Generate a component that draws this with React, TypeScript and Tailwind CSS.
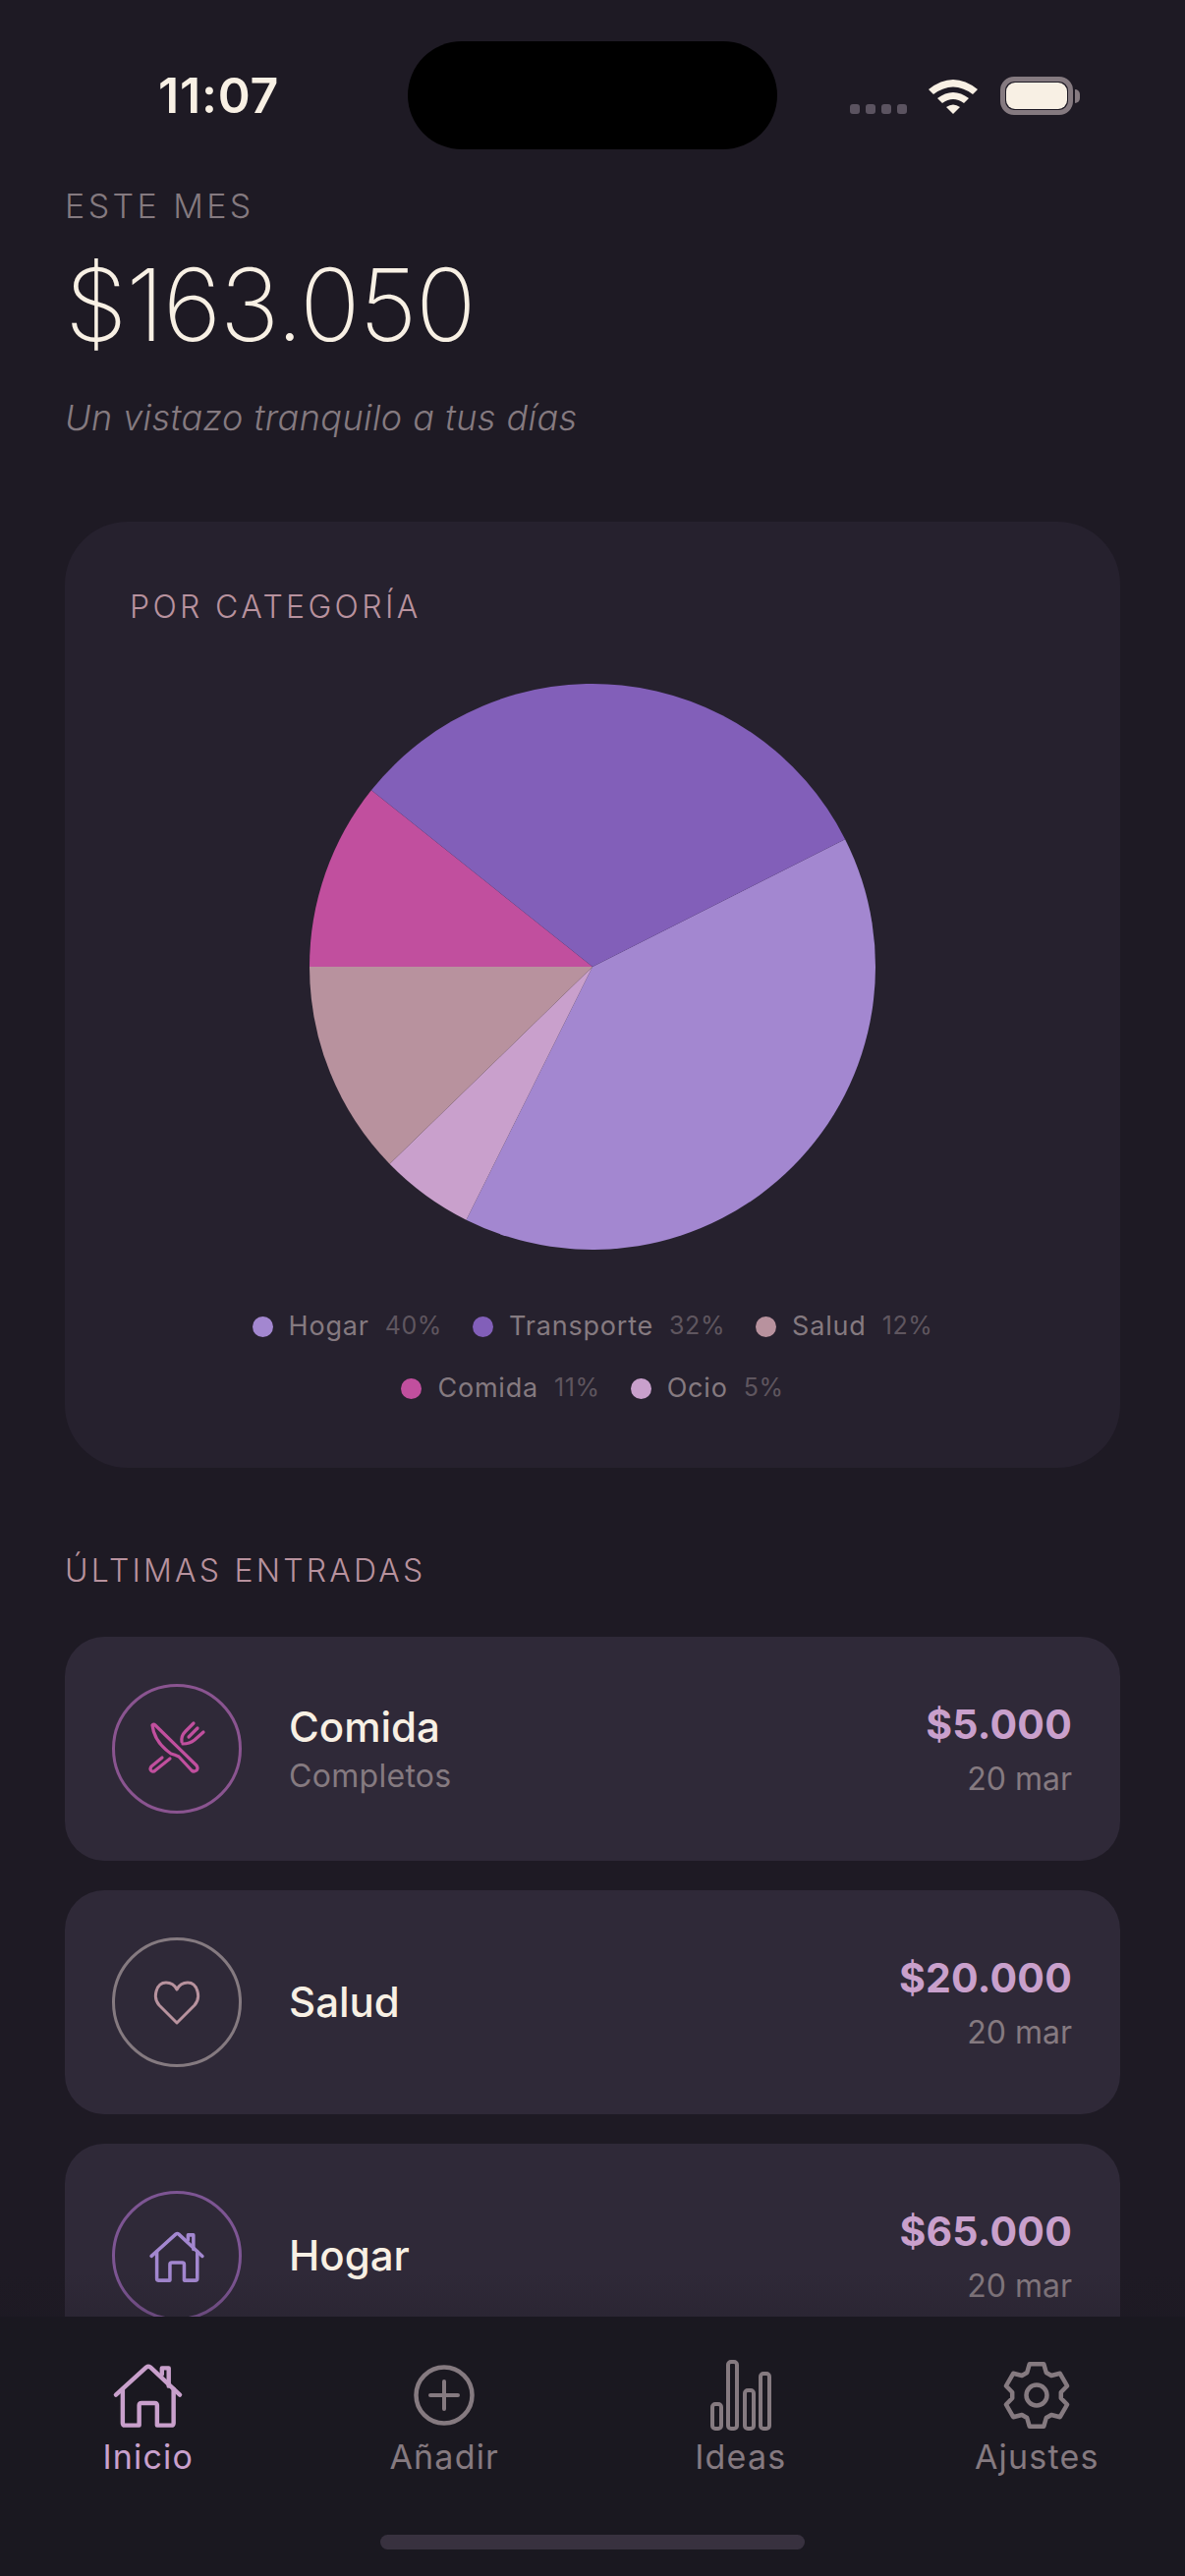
const font = { fontFamily: 'Inter, "Noto Sans", sans-serif' };

const slices = [
  { color: '#a387d0', from: -26.8, to: 116.5 },
  { color: '#c9a0cc', from: 116.5, to: 135.8 },
  { color: '#b8929e', from: 135.8, to: 180 },
  { color: '#c14f9e', from: 180, to: 218.6 },
  { color: '#825fb9', from: 218.6, to: 333.2 },
];

const legend = [
  { name: 'Hogar', pct: '40%', color: '#a387d0' },
  { name: 'Transporte', pct: '32%', color: '#825fb9' },
  { name: 'Salud', pct: '12%', color: '#b8929e' },
  { name: 'Comida', pct: '11%', color: '#c14f9e' },
  { name: 'Ocio', pct: '5%', color: '#c9a0cc' },
];

function slicePath(from: number, to: number) {
  const r = 288;
  const a = (from * Math.PI) / 180;
  const b = (to * Math.PI) / 180;
  const large = to - from > 180 ? 1 : 0;
  return `M288 288 L${288 + r * Math.cos(a)} ${288 + r * Math.sin(a)} A${r} ${r} 0 ${large} 1 ${288 + r * Math.cos(b)} ${288 + r * Math.sin(b)} Z`;
}

function gearPath() {
  const pts: string[] = [];
  for (let k = 0; k < 6; k++) {
    const c = -90 + k * 60;
    const at = (r: number, d: number) => {
      const t = ((c + d) * Math.PI) / 180;
      return `${(45 + r * Math.cos(t)).toFixed(1)} ${(45 + r * Math.sin(t)).toFixed(1)}`;
    };
    pts.push(at(25, -23), at(32.5, -13), at(32.5, 13), at(25, 23));
  }
  return 'M' + pts.join(' L') + ' Z';
}

function HouseIcon({ className, color, width }: { className?: string; color: string; width: number }) {
  return (
    <svg viewBox="8 8 74 70" width={width} className={className} fill="none" stroke={color} strokeWidth="4.5" strokeLinecap="round" strokeLinejoin="round">
      <path d="M12 43 L43.5 14.5 Q45.5 13 47.5 14.5 L78 43" />
      <path d="M19 37 V72 Q19 74.5 21.5 74.5 H36 V54 Q36 51.5 38.5 51.5 H52 Q54.5 51.5 54.5 54 V74.5 H69 Q71.5 74.5 71.5 72 V37" />
      <path d="M59.5 22 V15.5 H66.5 V34" />
    </svg>
  );
}

function CutleryIcon() {
  return (
    <svg viewBox="0 0 80 80" width="80" height="80" fill="none" stroke="#c14f9e" strokeWidth="3.2" strokeLinecap="round" strokeLinejoin="round">
      <path d="M15 16 Q16 14 18 16 L60 57 Q62 60 60 62 Q57 64 55 62 L42 48 Q38 46 34 45 Q17 33 15 16 Z" />
      <path d="M25 49 L14 58 Q12 61 14 62.5 Q16 64 18 62 L33 50" />
      <path d="M57 14 L49 22 Q44 27 45 33" />
      <path d="M61 19 L52 28" />
      <path d="M67 23 L58 31 Q53 35 46 35" />
    </svg>
  );
}

function HeartIcon() {
  return (
    <svg viewBox="0 0 48 45" width="48" height="45" fill="none" stroke="#b8929e" strokeWidth="3" strokeLinejoin="round">
      <path d="M24 43 L6 25 C-1 17 3 2 13 2 C18 2 22 5 24 9 C26 5 30 2 35 2 C45 2 49 17 42 25 Z" />
    </svg>
  );
}

function PlusIcon() {
  return (
    <svg viewBox="0 0 62 62" width="62" height="62" fill="none" stroke="#857a80" strokeLinecap="round">
      <circle cx="31" cy="31" r="28.5" strokeWidth="4.5" />
      <path d="M31 17 V45 M17 31 H45" strokeWidth="4" />
    </svg>
  );
}

function BarsIcon() {
  return (
    <svg viewBox="0 0 62 72" width="62" height="72" fill="none" stroke="#857a80" strokeWidth="4">
      <rect x="2" y="45" width="9" height="25" rx="3" />
      <rect x="18" y="2" width="9" height="68" rx="3" />
      <rect x="35" y="31" width="9" height="39" rx="3" />
      <rect x="51" y="14" width="9" height="56" rx="3" />
    </svg>
  );
}

function GearIcon() {
  return (
    <svg viewBox="10 10 70 70" width="70" height="70" fill="none" stroke="#857a80" strokeWidth="4.5" strokeLinejoin="round">
      <path d={gearPath()} />
      <circle cx="45" cy="45" r="10.5" />
    </svg>
  );
}

function WifiIcon() {
  return (
    <svg viewBox="0 0 50 37" width="50" height="37" fill="#f8f0e4">
      <path d="M0 12 Q25 -8 50 12 L45 17 Q25 2 5 17 Z" />
      <path d="M9 21 Q25 9 41 21 L36 26 Q25 18 14 26 Z" />
      <path d="M18 30 Q25 25 32 30 L25 37 Z" />
    </svg>
  );
}

function EntryCard({ icon, border, title, sub, amount }: { icon: React.ReactNode; border: string; title: string; sub?: string; amount: string }) {
  return (
    <div className="flex h-[228px] shrink-0 items-center rounded-[40px] bg-[#2f2938] pl-[48px] pr-[49px]">
      <div className={`flex h-[132px] w-[132px] shrink-0 items-center justify-center rounded-full border-[3px] ${border}`}>{icon}</div>
      <div className="ml-[48px] flex-1">
        <div className="text-[42px] leading-[50px] font-medium text-[#f8f0e4]">{title}</div>
        {sub && <div className="mt-[5px] text-[32px] leading-[40px] tracking-[0.3px] text-[#857a80]">{sub}</div>}
      </div>
      <div className="text-right">
        <div className="text-[41px] leading-[50px] font-bold tracking-[0.2px] text-[#c9a0cc]">{amount}</div>
        <div className="mt-[11px] text-[32px] leading-[40px] text-[#857a80]">20 mar</div>
      </div>
    </div>
  );
}

function NavItem({ icon, label, active }: { icon: React.ReactNode; label: string; active?: boolean }) {
  return (
    <div className="flex flex-col items-center">
      <div className="flex h-[76px] items-center justify-center">{icon}</div>
      <div className={`mt-[4px] text-[34px] leading-[42px] tracking-[1.2px] ${active ? 'text-[#c9a0cc]' : 'text-[#857a80]'}`}>{label}</div>
    </div>
  );
}

export default function App() {
  return (
    <div className="flex h-[2622px] w-[1206px] flex-col overflow-hidden bg-[#1e1a24]" style={font}>
      <div className="relative flex-1 overflow-hidden">
        <div className="flex h-[152px] items-start pt-[42px]">
          <div className="mt-[30px] w-[415px] pl-[161px] text-[50px] leading-[50px] font-semibold tracking-[0.8px] text-[#f8f0e4]">11:07</div>
          <div className="h-[110px] w-[376px] rounded-full bg-black" />
          <div className="ml-[74px] mt-[36px] flex items-start">
            <div className="mt-[28px] flex gap-[6px]">
              <span className="h-[10px] w-[10px] rounded-[3px] bg-[#5b5360]" />
              <span className="h-[10px] w-[10px] rounded-[3px] bg-[#5b5360]" />
              <span className="h-[10px] w-[10px] rounded-[3px] bg-[#5b5360]" />
              <span className="h-[10px] w-[10px] rounded-[3px] bg-[#5b5360]" />
            </div>
            <div className="ml-[22px] mt-[1px]"><WifiIcon /></div>
            <div className="ml-[23px] flex items-center">
              <div className="flex h-[39px] w-[74px] items-center justify-center rounded-[14px] border-[5px] border-[#857a80] p-[1px]">
                <div className="h-full w-full rounded-[9px] bg-[#f8f0e4]" />
              </div>
              <div className="ml-[2px] h-[14px] w-[5px] rounded-r-full bg-[#857a80]" />
            </div>
          </div>
        </div>

        <div className="px-[66px]">
          <div className="mt-[38px] text-[34px] leading-[40px] font-light tracking-[3.4px] text-[#857a80]">ESTE MES</div>
          <div className="mt-[24px] text-[102px] leading-[112px] font-[250] tracking-[-1.3px] text-[#f8f0e4]">$163.050</div>
          <div className="mt-[37px] text-[36px] leading-[44px] font-light italic tracking-[0.45px] text-[#857a80]">Un vistazo tranquilo a tus días</div>

          <div className="mt-[84px] h-[963px] rounded-[64px] bg-[#26212e] pt-[69px]">
            <div className="pl-[66px] text-[32px] leading-[36px] font-light tracking-[3.35px] text-[#b8929e]">POR CATEGORÍA</div>
            <div className="mt-[60px] flex justify-center">
              <svg viewBox="0 0 576 576" width="576" height="576">
                {slices.map((s) => (
                  <path key={s.color} d={slicePath(s.from, s.to)} fill={s.color} />
                ))}
              </svg>
            </div>
            <div className="mx-auto mt-[57px] flex w-[800px] flex-wrap justify-center gap-x-[31px] gap-y-[21px]">
              {legend.map((l) => (
                <div key={l.name} className="flex h-[42px] items-center">
                  <span className="h-[21px] w-[21px] rounded-full" style={{ backgroundColor: l.color }} />
                  <span className="ml-[16px] text-[27px] tracking-[0.8px] text-[#857a80]">{l.name}</span>
                  <span className="ml-[16px] text-[25px] tracking-[0.6px] text-[#5f565f]">{l.pct}</span>
                </div>
              ))}
            </div>
          </div>

          <div className="mt-[85px] text-[32px] leading-[40px] font-light tracking-[3.2px] text-[#b8929e]">ÚLTIMAS ENTRADAS</div>
          <div className="mt-[47px] flex flex-col gap-[30px]">
            <EntryCard icon={<CutleryIcon />} border="border-[#8a5490]" title="Comida" sub="Completos" amount="$5.000" />
            <EntryCard icon={<HeartIcon />} border="border-[#857a80]" title="Salud" amount="$20.000" />
            <EntryCard icon={<HouseIcon color="#a387d0" width={58} />} border="border-[#7d5593]" title="Hogar" amount="$65.000" />
          </div>
        </div>

        <div className="pointer-events-none absolute inset-x-0 bottom-0 h-[45px] bg-gradient-to-b from-transparent to-[#1a182033]" />
      </div>

      <div className="relative h-[264px] shrink-0 bg-[#1a1820] pt-[42px]">
        <div className="grid grid-cols-4">
          <NavItem icon={<HouseIcon color="#c9a0cc" width={73} />} label="Inicio" active />
          <NavItem icon={<PlusIcon />} label="Añadir" />
          <NavItem icon={<BarsIcon />} label="Ideas" />
          <NavItem icon={<GearIcon />} label="Ajustes" />
        </div>
        <div className="mx-auto mt-[58px] h-[15px] w-[432px] rounded-full bg-[#38313f]" />
      </div>
    </div>
  );
}
